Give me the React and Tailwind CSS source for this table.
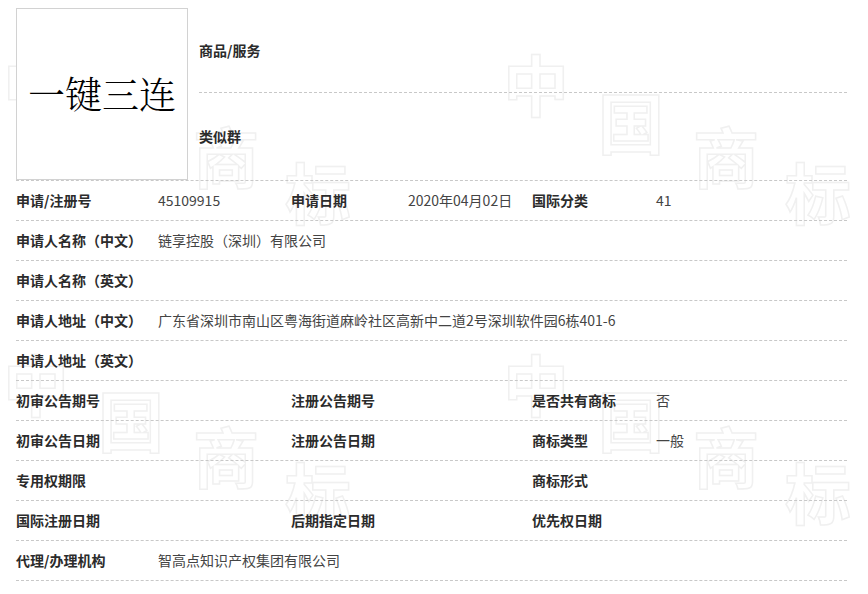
import React from 'react';

const font = { fontFamily: '"Noto Sans CJK SC", "Liberation Sans", sans-serif' };

// 水印位置（每组“中国商标”）
const marks = [
  { ch: '中', x: 5, y: 55 },
  { ch: '国', x: 100, y: 93 },
  { ch: '商', x: 195, y: 127 },
  { ch: '标', x: 287, y: 163 },
  { ch: '中', x: 505, y: 55 },
  { ch: '国', x: 600, y: 93 },
  { ch: '商', x: 695, y: 127 },
  { ch: '标', x: 787, y: 163 },
  { ch: '中', x: 5, y: 355 },
  { ch: '国', x: 100, y: 391 },
  { ch: '商', x: 195, y: 427 },
  { ch: '标', x: 287, y: 463 },
  { ch: '中', x: 505, y: 355 },
  { ch: '国', x: 600, y: 391 },
  { ch: '商', x: 695, y: 427 },
  { ch: '标', x: 787, y: 463 },
];

const rows = [
  ['申请/注册号', '45109915', '申请日期', '2020年04月02日', '国际分类', '41'],
  ['申请人名称（中文）', '链享控股（深圳）有限公司'],
  ['申请人名称（英文）', ''],
  ['申请人地址（中文）', '广东省深圳市南山区粤海街道麻岭社区高新中二道2号深圳软件园6栋401-6'],
  ['申请人地址（英文）', ''],
  ['初审公告期号', '', '注册公告期号', '', '是否共有商标', '否'],
  ['初审公告日期', '', '注册公告日期', '', '商标类型', '一般'],
  ['专用权期限', '', '', '', '商标形式', ''],
  ['国际注册日期', '', '后期指定日期', '', '优先权日期', ''],
  ['代理/办理机构', '智高点知识产权集团有限公司'],
];

const Label = ({ children }) => (
  <div className="font-bold text-[14px] text-[#2b2b2b] whitespace-nowrap">{children}</div>
);

const Value = ({ children, wide }) => (
  <div className={`text-[14px] text-[#444] whitespace-nowrap ${wide ? 'col-span-5' : ''}`}>{children}</div>
);

export default function App() {
  return (
    <div className="relative w-[868px] h-[594px] overflow-hidden bg-white" style={font}>
      {/* 水印 */}
      <div aria-hidden="true" className="absolute inset-0 pointer-events-none select-none">
        {marks.map((m, i) => (
          <span
            key={i}
            className="absolute text-[66px] leading-none font-bold text-transparent [-webkit-text-stroke:1.5px_#f0f0f0]"
            style={{ left: m.x - 2, top: m.y - 6 }}
          >
            {m.ch}
          </span>
        ))}
      </div>

      <div className="relative ml-4 w-[831px]">
        {/* 商标图样 + 商品/服务 */}
        <div className="flex pt-2 border-b border-dashed border-[#c8c8c8]">
          <div className="w-[172px] h-[172px] border border-[#d2d2d2] bg-white flex items-center justify-center">
            <span
              className="text-[37px] font-light text-black"
              style={{ fontFamily: '"Noto Serif CJK SC", "Noto Sans CJK SC", serif' }}
            >
              一键三连
            </span>
          </div>
          <div className="flex-1 ml-[11px] flex flex-col">
            <div className="h-[85px] flex items-center border-b border-dashed border-[#c8c8c8]">
              <Label>商品/服务</Label>
            </div>
            <div className="flex-1 flex items-center">
              <Label>类似群</Label>
            </div>
          </div>
        </div>

        {/* 详细信息 */}
        {rows.map((r, i) => (
          <div
            key={i}
            className="grid grid-cols-[142px_133px_117px_124px_124px_1fr] h-10 items-center border-b border-dashed border-[#c8c8c8]"
          >
            <Label>{r[0]}</Label>
            {r.length === 2 ? (
              <Value wide>{r[1]}</Value>
            ) : (
              <>
                <Value>{r[1]}</Value>
                <Label>{r[2]}</Label>
                <Value>{r[3]}</Value>
                <Label>{r[4]}</Label>
                <Value>{r[5]}</Value>
              </>
            )}
          </div>
        ))}
      </div>
    </div>
  );
}
